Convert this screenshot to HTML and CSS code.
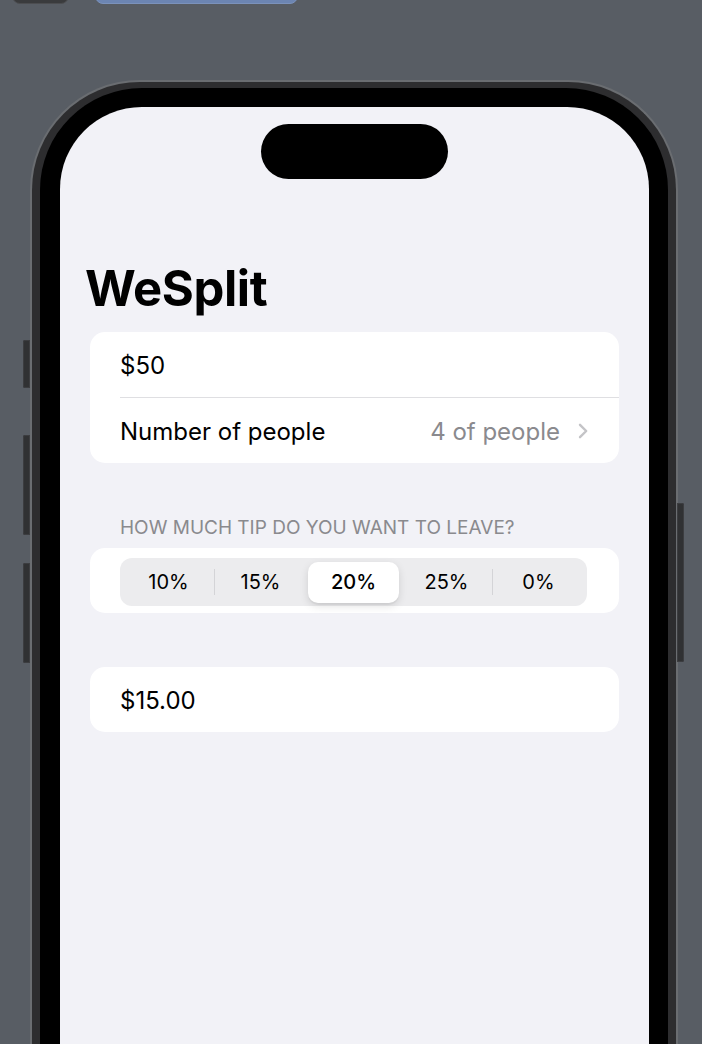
FILE: index.html
```html
<!DOCTYPE html>
<html lang="en">
<head>
<meta charset="utf-8">
<title>WeSplit</title>
<link rel="stylesheet" href="styles.css">
</head>
<body>
<div class="toolbar">
  <div class="tb-btn tb-dark"></div>
  <div class="tb-btn tb-blue"></div>
</div>
<div class="device">
  <div class="rail rail-left">
    <span class="side-btn mute"></span>
    <span class="side-btn vol-up"></span>
    <span class="side-btn vol-down"></span>
  </div>
  <div class="phone">
    <div class="bezel">
      <div class="screen">
        <div class="island"></div>
        <h1 class="title">WeSplit</h1>
        <div class="card">
          <div class="row"><span class="label">$50</span></div>
          <div class="row">
            <span class="label">Number of people</span>
            <span class="value">4 of people
              <svg class="chevron" width="10" height="16" viewBox="0 0 10 16"><path d="M2 1.8 L8.2 8 L2 14.2" fill="none" stroke="#c4c4c7" stroke-width="2.4" stroke-linecap="round" stroke-linejoin="round"/></svg>
            </span>
          </div>
        </div>
        <div class="section-header">HOW MUCH TIP DO YOU WANT TO LEAVE?</div>
        <div class="card seg-card">
          <div class="segmented">
            <div class="seg">10%</div>
            <div class="sep"></div>
            <div class="seg">15%</div>
            <div class="sep hidden"></div>
            <div class="seg selected">20%</div>
            <div class="sep hidden"></div>
            <div class="seg">25%</div>
            <div class="sep"></div>
            <div class="seg">0%</div>
          </div>
        </div>
        <div class="card total-card">
          <div class="row"><span class="label">$15.00</span></div>
        </div>
      </div>
    </div>
  </div>
  <div class="rail rail-right">
    <span class="side-btn power"></span>
  </div>
</div>
</body>
</html>
```
FILE: styles.css
```css
html, body {
  margin: 0;
  padding: 0;
}
body {
  background: #585d64;
  height: 1044px;
  overflow: hidden;
  font-family: Inter, "Noto Sans", "Liberation Sans", sans-serif;
}

/* top toolbar (cut off) */
.toolbar {
  display: flex;
  height: 4px;
  padding-left: 12px;
  gap: 26px;
}
.tb-btn {
  height: 30px;
  margin-top: -26px;
  border-radius: 8px;
  box-sizing: border-box;
}
.tb-dark {
  width: 57px;
  background: #3a3b3d;
  border: 1px solid #4c4d50;
}
.tb-blue {
  width: 203px;
  background: #6c85b2;
  border: 1px solid #7b92bb;
}

/* device */
.device {
  display: flex;
  margin-top: 76px;
  margin-left: 24px;
}
.rail {
  display: flex;
  flex-direction: column;
}
.rail-left {
  width: 6px;
  padding-top: 260px;
  align-items: flex-end;
}
.rail-right {
  width: 6px;
  padding-top: 423px;
  margin-left: -1px;
}
.side-btn {
  display: block;
  width: 7px;
  background: #303133;
  box-shadow: inset 0 0 0 1px #3c3d40;
}
.rail-left .side-btn {
  border-radius: 2px 0 0 2px;
}
.rail-right .side-btn {
  border-radius: 0 2px 2px 0;
}
.mute { height: 48px; }
.vol-up { height: 100px; margin-top: 47px; }
.vol-down { height: 100px; margin-top: 28px; }
.power { height: 159px; }

.phone {
  width: 648px;
  height: 1000px;
  box-sizing: border-box;
  border: 2px solid #6a6d71;
  border-bottom: none;
  border-radius: 110px 110px 0 0;
  background: #2d2d2f;
  padding: 6px 8px 0 8px;
}
.bezel {
  height: 100%;
  box-sizing: border-box;
  background: #000;
  border-radius: 102px 102px 0 0;
  padding: 19px 19px 0 20px;
}
.screen {
  height: 100%;
  box-sizing: border-box;
  background: #f2f2f7;
  border-radius: 82px 82px 0 0;
  padding: 17px 30px 0 30px;
  display: flex;
  flex-direction: column;
}
.island {
  width: 187px;
  height: 55px;
  border-radius: 28px;
  background: #000;
  align-self: center;
}
.title {
  margin: 80px 0 0 -5px;
  font-size: 49px;
  line-height: 60px;
  font-weight: 700;
  color: #000;
  letter-spacing: -0.4px;
}

.card {
  background: #fff;
  border-radius: 15px;
  margin-top: 13px;
}
.row {
  margin-left: 30px;
  padding-right: 31px;
  height: 65px;
  display: flex;
  align-items: center;
  justify-content: space-between;
  font-size: 24px;
  color: #000;
}
.row + .row {
  border-top: 1px solid #dfdfe2;
}
.label {
  line-height: 30px;
  padding-top: 2px;
}
.value {
  display: flex;
  align-items: center;
  gap: 18px;
  color: #8a8a8e;
  line-height: 30px;
  padding-top: 2px;
}
.chevron {
  display: block;
  margin-top: -2px;
}

.section-header {
  margin-top: 53px;
  margin-left: 30px;
  font-size: 19px;
  line-height: 24px;
  color: #8a8a8e;
}

.seg-card {
  margin-top: 8px;
  padding: 10px 32px 7px 30px;
}
.segmented {
  display: flex;
  align-items: center;
  height: 48px;
  background: #ececee;
  border-radius: 12px;
  padding: 0 3px;
}
.seg {
  flex: 1;
  height: 41px;
  display: flex;
  align-items: center;
  justify-content: center;
  font-size: 20px;
  font-weight: 400;
  color: #000;
  border-radius: 10px;
}
.seg.selected {
  background: #fff;
  font-weight: 500;
  margin: 0 1px;
  box-shadow: 0 3px 8px rgba(0,0,0,0.12), 0 2px 1px rgba(0,0,0,0.04);
}
.sep {
  width: 1px;
  height: 26px;
  background: #d4d4d7;
}
.sep.hidden {
  background: transparent;
}

.total-card {
  margin-top: 54px;
}
```
